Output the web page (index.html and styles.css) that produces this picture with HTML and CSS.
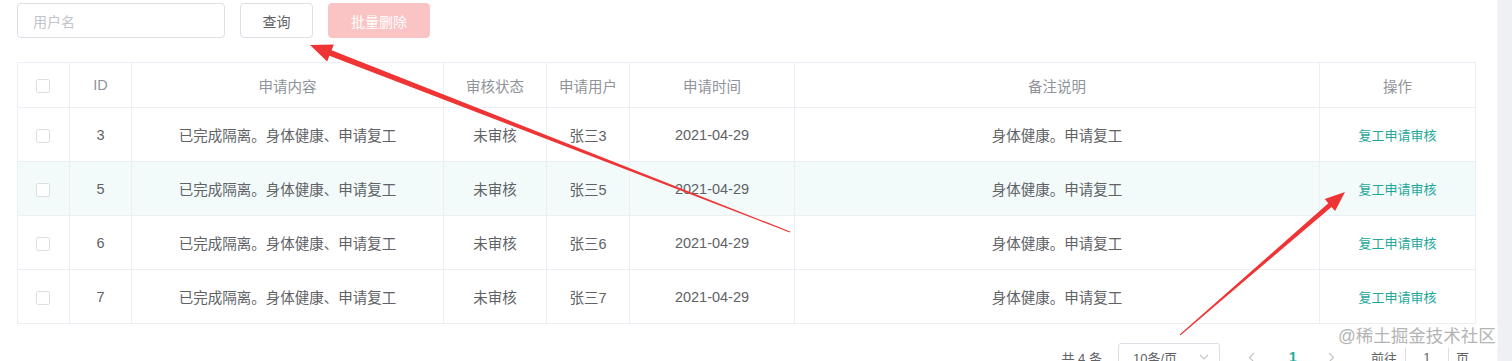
FILE: index.html
```html
<!DOCTYPE html>
<html lang="zh-CN">
<head>
<meta charset="utf-8">
<title>复工申请</title>
<link rel="stylesheet" href="styles.css">
</head>
<body>
<div class="app">
  <main class="page">
    <div class="toolbar">
      <div class="input"><span class="placeholder">用户名</span></div>
      <button class="btn">查询</button>
      <button class="btn btn-danger">批量删除</button>
    </div>

    <table class="table">
      <colgroup>
        <col style="width:52px"><col style="width:62px"><col style="width:312px"><col style="width:103px">
        <col style="width:83px"><col style="width:165px"><col style="width:525px"><col style="width:156px">
      </colgroup>
      <thead>
        <tr>
          <th><span class="checkbox"></span></th>
          <th>ID</th><th>申请内容</th><th>审核状态</th><th>申请用户</th><th>申请时间</th><th>备注说明</th><th>操作</th>
        </tr>
      </thead>
      <tbody>
        <tr>
          <td><span class="checkbox"></span></td><td>3</td><td>已完成隔离。身体健康、申请复工</td><td>未审核</td><td>张三3</td><td>2021-04-29</td><td>身体健康。申请复工</td><td><a class="link">复工申请审核</a></td>
        </tr>
        <tr class="hover">
          <td><span class="checkbox"></span></td><td>5</td><td>已完成隔离。身体健康、申请复工</td><td>未审核</td><td>张三5</td><td>2021-04-29</td><td>身体健康。申请复工</td><td><a class="link">复工申请审核</a></td>
        </tr>
        <tr>
          <td><span class="checkbox"></span></td><td>6</td><td>已完成隔离。身体健康、申请复工</td><td>未审核</td><td>张三6</td><td>2021-04-29</td><td>身体健康。申请复工</td><td><a class="link">复工申请审核</a></td>
        </tr>
        <tr>
          <td><span class="checkbox"></span></td><td>7</td><td>已完成隔离。身体健康、申请复工</td><td>未审核</td><td>张三7</td><td>2021-04-29</td><td>身体健康。申请复工</td><td><a class="link">复工申请审核</a></td>
        </tr>
      </tbody>
    </table>

    <div class="pagination">
      <span class="total">共 4 条</span>
      <div class="select"><span>10条/页</span>
        <svg class="chev" width="10" height="6" viewBox="0 0 10 6"><path d="M1 1 L5 5 L9 1" fill="none" stroke="#c0c4cc" stroke-width="1.2"/></svg>
      </div>
      <span class="pbtn">
        <svg width="7" height="11" viewBox="0 0 7 11"><path d="M6 1 L1.5 5.5 L6 10" fill="none" stroke="#c0c4cc" stroke-width="1.2"/></svg>
      </span>
      <span class="pager">1</span>
      <span class="pbtn">
        <svg width="7" height="11" viewBox="0 0 7 11"><path d="M1 1 L5.5 5.5 L1 10" fill="none" stroke="#c0c4cc" stroke-width="1.2"/></svg>
      </span>
      <span class="jump">前往</span>
      <div class="jump-input">1</div>
      <span class="jump-unit">页</span>
    </div>
  </main>
  <aside class="scrollbar"></aside>
</div>

<div class="watermark">@稀土掘金技术社区</div>

<svg class="arrows" width="1512" height="361" viewBox="0 0 1512 361">
  <polygon fill="#ee3434" points="310,45 327.2,61.4 329.4,55.8 789.8,232.5 790.2,231.5 331.6,50.2 333.8,44.6"/>
  <polygon fill="#ee3434" points="1345,192 1324.7,199.1 1328.3,203.2 1179.7,334.6 1180.3,335.4 1331.5,207.0 1335.1,211.1"/>
</svg>
</body>
</html>
```

FILE: styles.css
```css
* { box-sizing: border-box; }
html, body { margin: 0; padding: 0; }
body {
  width: 1512px;
  height: 361px;
  overflow: hidden;
  background: #fff;
  font-family: "Liberation Sans", "Noto Sans CJK SC", sans-serif;
  color: #606266;
  position: relative;
}
.app { display: flex; height: 361px; }
.page { flex: 1; padding: 3px 21px 0 17px; }
.scrollbar { width: 16px; background: #eef0f3; border-left: 1px solid #f4f5f7; }

.toolbar { display: flex; align-items: center; gap: 15px; height: 35px; }
.input {
  width: 208px; height: 35px;
  border: 1px solid #dcdfe6; border-radius: 4px;
  display: flex; align-items: center; padding-left: 15px;
}
.placeholder { color: #c0c4cc; font-size: 14px; }
.btn {
  height: 35px; width: 73px;
  border: 1px solid #dcdfe6; border-radius: 4px; background: #fff;
  color: #606266; font-size: 14px; font-family: inherit; padding: 0;
}
.btn-danger { width: 102px; background: #fbc4c4; border-color: #fbc4c4; color: #fff; }

.table {
  margin-top: 24px;
  width: 1458px;
  table-layout: fixed;
  border-collapse: collapse;
  border: 1px solid #ebeef5;
  font-size: 14.5px;
}
.table th, .table td {
  border-bottom: 1px solid #ebeef5;
  border-right: 1px solid #ebeef5;
  text-align: center;
  padding: 0;
  white-space: nowrap;
}
.table th { height: 45px; color: #909399; font-weight: normal; }
.table td { height: 54px; color: #606266; }
.table tr.hover td { background: #f2fafa; }
.checkbox {
  display: inline-block; width: 14px; height: 14px;
  border: 1px solid #dcdfe6; border-radius: 2px; background: #fff;
  vertical-align: middle;
  margin-left: -2px;
}
.link { color: #1fa89a; font-size: 13px; }

.pagination {
  margin-top: 19px;
  display: flex; justify-content: flex-end; align-items: center;
  height: 28px; font-size: 13px; color: #606266;
  padding-right: 7px;
}
.total { margin-right: 16px; }
.select {
  width: 102px; height: 28px; border: 1px solid #dcdfe6; border-radius: 3px;
  display: flex; align-items: center; justify-content: space-between;
  padding: 0 10px 0 14px; margin-right: 17px;
}
.pbtn { width: 30px; display: flex; justify-content: center; align-items: center; }
.pager { width: 36px; margin: 0 6px 0 8px; text-align: center; color: #1fa89a; font-weight: bold; font-size: 14px; }
.jump { margin-left: 24px; }
.jump-input {
  width: 44px; height: 28px; margin: 0 7px 0 8px;
  border: 1px solid #dcdfe6; border-radius: 3px;
  display: flex; align-items: center; justify-content: center;
}

.watermark {
  position: absolute; left: 1336px; top: 325px;
  padding: 0 2px;
  font-size: 17.5px; line-height: 23px; color: #b4b4b4;
  background: rgba(255,255,255,0.85);
}
.arrows { position: absolute; left: 0; top: 0; pointer-events: none; }
```
